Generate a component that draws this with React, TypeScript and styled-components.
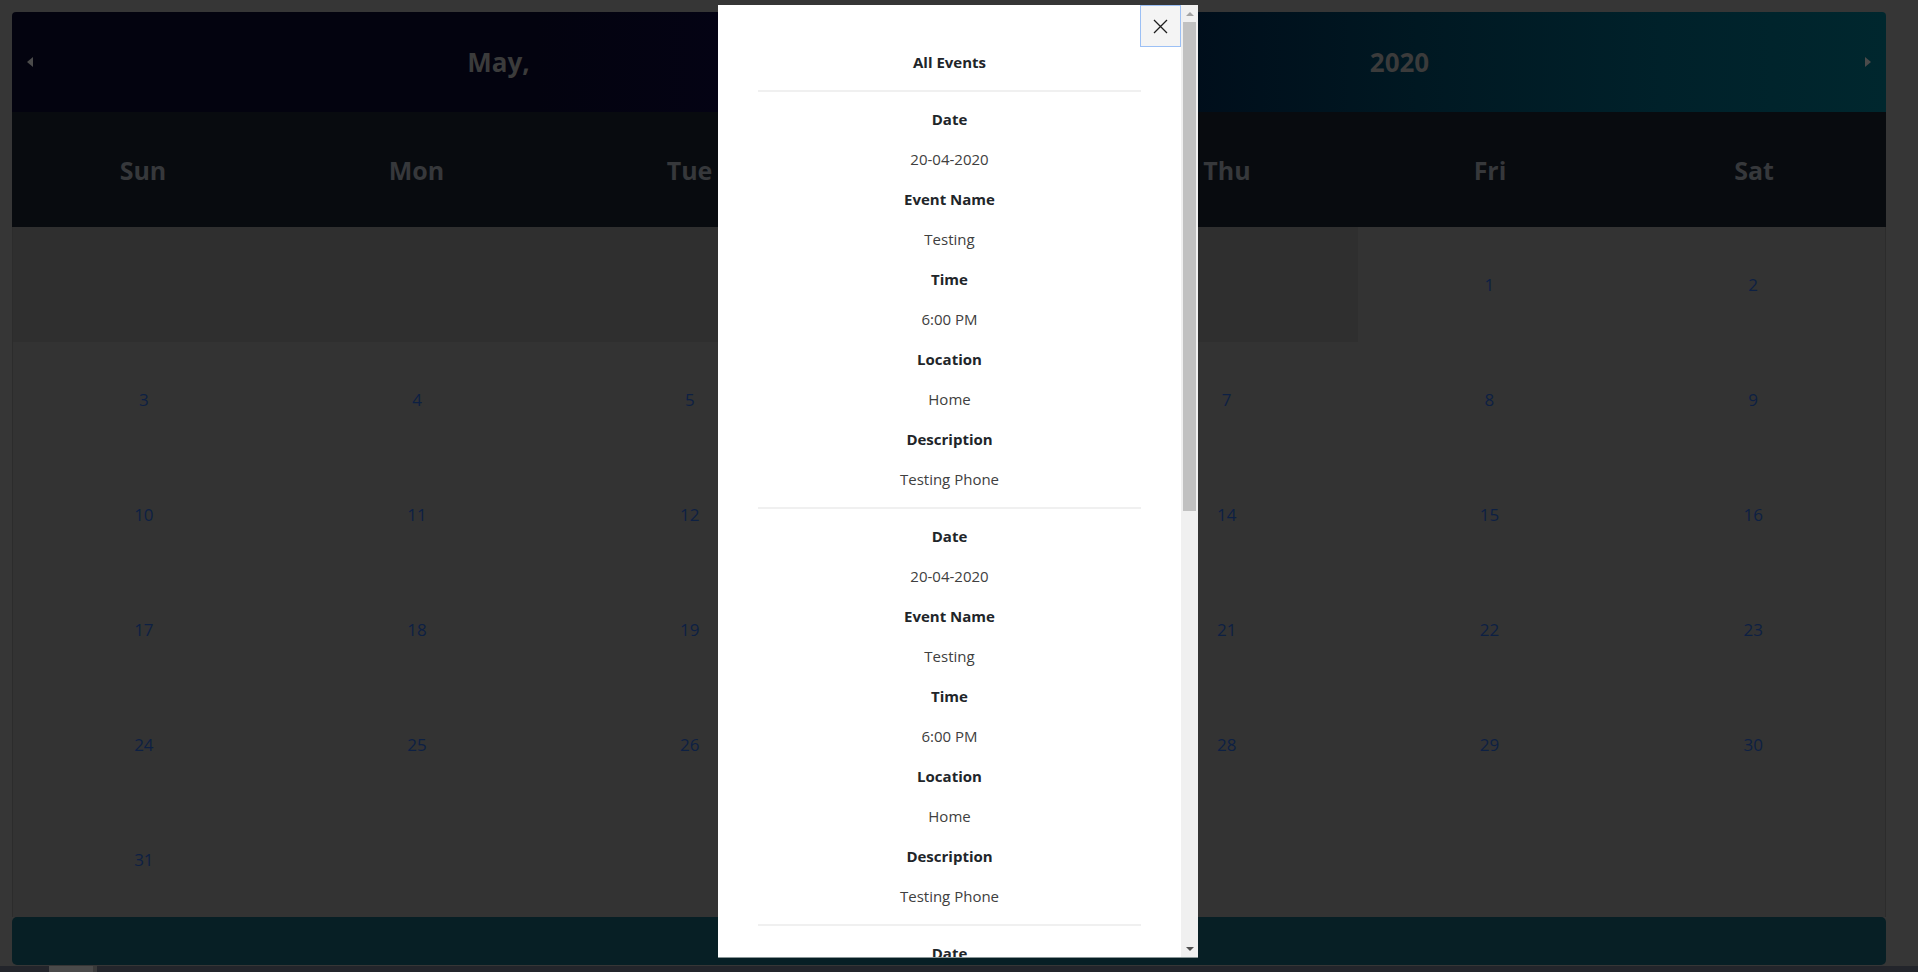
import React from "react";
import styled, { createGlobalStyle } from "styled-components";

const GlobalStyle = createGlobalStyle`
  html, body { margin: 0; padding: 0; }
  body {
    background: #363636;
    font-family: "Open Sans", "Noto Sans", sans-serif;
    overflow: hidden;
  }
  * { box-sizing: border-box; }
`;

const Page = styled.div`
  height: 972px;
  padding: 12px 32px 0 12px;
`;

const Calendar = styled.div`
  width: 1874px;
  display: flex;
  flex-direction: column;
`;

const Header = styled.div`
  height: 100px;
  display: flex;
  align-items: center;
  border-radius: 4px 4px 0 0;
  background: linear-gradient(
    90deg,
    #03030f 0%,
    #03030f 28%,
    #040314 38%,
    #020816 52%,
    #000e1b 63%,
    #001822 75%,
    #00212a 88%,
    #00272e 100%
  );
`;

const NavButton = styled.div`
  width: 36px;
  height: 100%;
  display: flex;
  align-items: center;
  justify-content: center;
`;

const Triangle = styled.span<{ $dir: "left" | "right" }>`
  width: 0;
  height: 0;
  border-top: 5.5px solid transparent;
  border-bottom: 5.5px solid transparent;
  ${(p) =>
    p.$dir === "left"
      ? "border-right: 6px solid #4b4b4b;"
      : "border-left: 6px solid #4b4b4b;"}
`;

const HeaderTitle = styled.div`
  flex: 1;
  text-align: center;
  font-size: 26px;
  font-weight: 700;
  color: #3b3b3b;
`;

const columns = "262fr 285fr 261fr 276fr 262fr 264fr 264fr";

const WeekRow = styled.div`
  display: grid;
  grid-template-columns: ${columns};
  height: 115px;
  background: #080b0f;
`;

const WeekDay = styled.div`
  display: flex;
  align-items: center;
  justify-content: center;
  font-size: 25px;
  font-weight: 700;
  color: #36383b;
`;

const Body = styled.div`
  display: grid;
  grid-template-columns: ${columns};
  grid-auto-rows: 115px;
  background: #333333;
  border-left: 1px solid #2c2c2c;
  border-right: 1px solid #2c2c2c;
`;

const DayCell = styled.div<{ $empty?: boolean }>`
  display: flex;
  align-items: center;
  justify-content: center;
  font-size: 17px;
  color: #0d2043;
  background: ${(p) => (p.$empty ? "#2f2f2f" : "transparent")};
`;

const FooterBar = styled.div`
  height: 48px;
  background: #071f25;
  border-radius: 5px;
`;

const WindowStrip = styled.div`
  position: fixed;
  left: 0;
  right: 0;
  bottom: 0;
  height: 6px;
  background: #23252b;
`;

const StripThumb = styled.div`
  position: absolute;
  left: 49px;
  top: 0;
  width: 48px;
  height: 100%;
  background: #4a4a4a;
  border-right: 4px solid #3a3a3a;
`;

/* ---------- Modal ---------- */

const Modal = styled.div`
  position: fixed;
  left: 718px;
  top: 5px;
  width: 480px;
  height: 953px;
  background: #ffffff;
  display: flex;
  border-bottom: 1px solid #8a9697;
`;

const ModalContent = styled.div`
  flex: 1;
  overflow: hidden;
  padding: 45px 40px 0;
  text-align: center;
  color: #212529;
`;

const CloseButton = styled.button`
  position: absolute;
  top: 0;
  right: 17px;
  width: 41px;
  height: 42px;
  padding: 0;
  background: #f4f4f4;
  border: 1px solid #9cc0f5;
  display: flex;
  align-items: center;
  justify-content: center;
  cursor: pointer;
`;

const Title = styled.p`
  margin: 0 0 16px;
  font-size: 15px;
  line-height: 24px;
  font-weight: 700;
`;

const Divider = styled.hr`
  margin: 16px 0 15px;
  border: 0;
  height: 2px;
  background: #f0f0f0;
`;

const Label = styled.p`
  margin: 0 0 16px;
  font-size: 15px;
  line-height: 24px;
  font-weight: 700;
  color: #212529;
`;

const Value = styled.p`
  margin: 0 0 16px;
  font-size: 15px;
  line-height: 24px;
  font-weight: 400;
  color: #404040;
`;

const Scrollbar = styled.div`
  width: 17px;
  background: #f0f0f0;
  display: flex;
  flex-direction: column;
`;

const ScrollArrow = styled.div`
  height: 17px;
  display: flex;
  align-items: center;
  justify-content: center;
`;

const ArrowGlyph = styled.span<{ $dir: "up" | "down"; $active?: boolean }>`
  width: 0;
  height: 0;
  border-left: 4px solid transparent;
  border-right: 4px solid transparent;
  ${(p) =>
    p.$dir === "up"
      ? `border-bottom: 4px solid ${p.$active ? "#505050" : "#a3a3a3"};`
      : `border-top: 4px solid ${p.$active ? "#505050" : "#a3a3a3"};`}
`;

const ScrollTrack = styled.div`
  flex: 1;
  padding: 0 2px;
`;

const ScrollThumb = styled.div`
  height: 489px;
  background: #c1c1c1;
`;

const weekDays = ["Sun", "Mon", "Tue", "Wed", "Thu", "Fri", "Sat"];

type EventItem = {
  date: string;
  name: string;
  time: string;
  location: string;
  description: string;
};

const events: EventItem[] = [
  { date: "20-04-2020", name: "Testing", time: "6:00 PM", location: "Home", description: "Testing Phone" },
  { date: "20-04-2020", name: "Testing", time: "6:00 PM", location: "Home", description: "Testing Phone" },
  { date: "20-04-2020", name: "Testing", time: "6:00 PM", location: "Home", description: "Testing Phone" },
];

const EventBlock: React.FC<{ ev: EventItem }> = ({ ev }) => (
  <div>
    <Label>Date</Label>
    <Value>{ev.date}</Value>
    <Label>Event Name</Label>
    <Value>{ev.name}</Value>
    <Label>Time</Label>
    <Value>{ev.time}</Value>
    <Label>Location</Label>
    <Value>{ev.location}</Value>
    <Label>Description</Label>
    <Value>{ev.description}</Value>
  </div>
);

export default function App() {
  const cells: { day?: number; empty?: boolean }[] = [];
  for (let i = 0; i < 5; i++) cells.push({ empty: true });
  for (let d = 1; d <= 31; d++) cells.push({ day: d });
  while (cells.length < 42) cells.push({});

  return (
    <>
      <GlobalStyle />
      <Page>
        <Calendar>
          <Header>
            <NavButton>
              <Triangle $dir="left" />
            </NavButton>
            <HeaderTitle>May,</HeaderTitle>
            <HeaderTitle>2020</HeaderTitle>
            <NavButton>
              <Triangle $dir="right" />
            </NavButton>
          </Header>
          <WeekRow>
            {weekDays.map((w) => (
              <WeekDay key={w}>{w}</WeekDay>
            ))}
          </WeekRow>
          <Body>
            {cells.map((c, i) => (
              <DayCell key={i} $empty={c.empty}>
                {c.day ?? ""}
              </DayCell>
            ))}
          </Body>
          <FooterBar />
        </Calendar>
      </Page>
      <WindowStrip>
        <StripThumb />
      </WindowStrip>

      <Modal>
        <ModalContent>
          <Title>All Events</Title>
          {events.map((ev, i) => (
            <React.Fragment key={i}>
              <Divider />
              <EventBlock ev={ev} />
            </React.Fragment>
          ))}
        </ModalContent>
        <CloseButton aria-label="Close">
          <svg width="15" height="15" viewBox="0 0 15 15">
            <path d="M1 1 L14 14 M14 1 L1 14" stroke="#1e1e1e" strokeWidth="1.3" fill="none" />
          </svg>
        </CloseButton>
        <Scrollbar>
          <ScrollArrow>
            <ArrowGlyph $dir="up" />
          </ScrollArrow>
          <ScrollTrack>
            <ScrollThumb />
          </ScrollTrack>
          <ScrollArrow>
            <ArrowGlyph $dir="down" $active />
          </ScrollArrow>
        </Scrollbar>
      </Modal>
    </>
  );
}
